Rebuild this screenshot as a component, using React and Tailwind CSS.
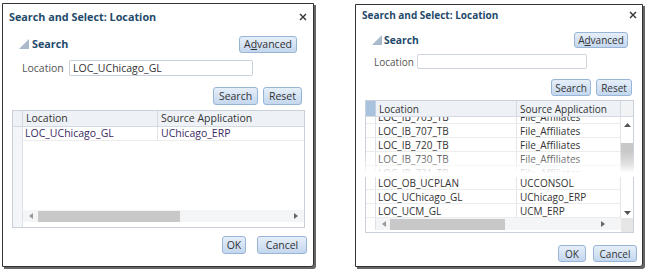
import React from 'react';

function Btn({ children, className }) {
    return (
        <div
            className={`flex items-center justify-center rounded-[3px] border border-[#98b4d6] bg-linear-to-b from-[#e6eff9] to-[#c4d7ee] text-[#333] ${className}`}
        >
            {children}
        </div>
    );
}

function CloseX() {
    return (
        <svg width="8" height="8" viewBox="0 0 8 8">
            <path d="M1 1L7 7M7 1L1 7" stroke="#333" strokeWidth="1.4" />
        </svg>
    );
}

function Disclosure() {
    return (
        <svg width="10" height="10" viewBox="0 0 10 10">
            <polygon points="0,10 10,0 10,10" fill="#a9bacd" />
        </svg>
    );
}

function ArrowLeft() {
    return (
        <svg width="4" height="6" viewBox="0 0 4 6">
            <polygon points="4,0 0,3 4,6" fill="#999" />
        </svg>
    );
}

function ArrowRight() {
    return (
        <svg width="4" height="6" viewBox="0 0 4 6">
            <polygon points="0,0 4,3 0,6" fill="#666" />
        </svg>
    );
}

function ArrowUp() {
    return (
        <svg width="7" height="4" viewBox="0 0 7 4">
            <polygon points="0,4 3.5,0 7,4" fill="#555" />
        </svg>
    );
}

function ArrowDown() {
    return (
        <svg width="7" height="4" viewBox="0 0 7 4">
            <polygon points="0,0 3.5,4 7,0" fill="#555" />
        </svg>
    );
}

function LeftDialog() {
    return (
        <div className="ml-[2px] mt-[3px] flex h-[264px] w-[312px] flex-col rounded-br-[3px] border border-[#333] bg-white text-[10.5px] shadow-[2px_2px_0_0_#666]">
            <div className="mt-[5px] flex h-[16px] items-center justify-between pl-[6px] pr-[6px]">
                <span className="text-[10.8px] font-bold text-[#1f4a6b]">Search and Select: Location</span>
                <CloseX />
            </div>

            <div className="mt-[11px] flex h-[17px] items-center justify-between pl-[16px] pr-[16px]">
                <div className="flex items-center gap-[3px]">
                    <Disclosure />
                    <span className="text-[10.8px] font-bold text-[#1f4a6b]">Search</span>
                </div>
                <Btn className="h-[17px] w-[58px]">
                    A<span className="underline">d</span>vanced
                </Btn>
            </div>

            <div className="mt-[7px] flex h-[16px] items-center pl-[19px]">
                <span className="w-[47px] text-[#555]">Location</span>
                <div className="flex h-[16px] w-[184px] items-center rounded-[2px] border border-[#c9d2dc] pl-[3px] text-[#333]">
                    LOC_UChicago_GL
                </div>
            </div>

            <div className="mt-[11px] flex h-[18px] justify-end gap-[5px] pr-[11px]">
                <Btn className="h-[18px] w-[45px]">Search</Btn>
                <Btn className="h-[18px] w-[39px]">Reset</Btn>
            </div>

            <div className="ml-[9px] mt-[5px] flex h-[118px] w-[293px] flex-col border border-[#c9d0d9]">
                <div className="flex h-[16px] border-b border-[#d4dae2] bg-[#eef2f6] text-[#333]">
                    <div className="w-[10px] border-r border-[#d4dae2]" />
                    <div className="flex w-[135px] items-center border-r border-[#d4dae2] pl-[3px]">Location</div>
                    <div className="flex flex-1 items-center pl-[3px]">Source Application</div>
                </div>
                <div className="flex flex-1">
                    <div className="w-[10px] border-r border-[#dde2e8] bg-[#f3f5f8]" />
                    <div className="flex flex-1 flex-col">
                        <div className="flex h-[14px] border-b border-[#ececec] text-[#3b2a66]">
                            <div className="flex w-[135px] items-center border-r border-[#e4e4e4] pl-[2px]">LOC_UChicago_GL</div>
                            <div className="flex flex-1 items-center pl-[3px]">UChicago_ERP</div>
                        </div>
                        <div className="flex-1" />
                        <div className="flex h-[12px] items-center bg-[#f4f5f7]">
                            <div className="ml-[6px]">
                                <ArrowLeft />
                            </div>
                            <div className="ml-[5px] h-[11px] w-[142px] bg-[#c8c8c8]" />
                            <div className="flex-1" />
                            <div className="mr-[6px]">
                                <ArrowRight />
                            </div>
                        </div>
                        <div className="h-[5px]" />
                    </div>
                </div>
            </div>

            <div className="mt-[8px] flex h-[18px] justify-end gap-[11px] pr-[6px]">
                <Btn className="h-[18px] w-[24px]">OK</Btn>
                <Btn className="h-[18px] w-[50px]">Cancel</Btn>
            </div>
        </div>
    );
}

const rightRows = [
    ['LOC_IB_707_TB', 'File_Affiliates'],
    ['LOC_IB_720_TB', 'File_Affiliates'],
    ['LOC_IB_730_TB', 'File_Affiliates'],
];

const rightRowsBottom = [
    ['LOC_OB_UCPLAN', 'UCCONSOL'],
    ['LOC_UChicago_GL', 'UChicago_ERP'],
    ['LOC_UCM_GL', 'UCM_ERP'],
];

function Row({ loc, app, className }) {
    return (
        <div className={`flex h-[14px] shrink-0 border-b border-[#ececec] text-[#333] ${className}`}>
            <div className="w-[10px] border-r border-[#dde2e8]" />
            <div className="flex w-[141px] items-center border-r border-[#e4e4e4] pl-[2px]">{loc}</div>
            <div className="flex flex-1 items-center pl-[3px]">{app}</div>
        </div>
    );
}

function RightDialog() {
    return (
        <div className="relative ml-[41px] mt-[4px] flex h-[263px] w-[288px] flex-col rounded-br-[3px] border border-[#333] bg-white text-[10px] shadow-[2px_2px_0_0_#666]">
            <div className="mt-[3px] flex h-[14px] items-center justify-between pl-[6px] pr-[5px]">
                <span className="text-[10px] font-bold text-[#1f4a6b]">Search and Select: Location</span>
                <CloseX />
            </div>

            <div className="mt-[10px] flex h-[16px] items-center justify-between pl-[16px] pr-[14px]">
                <div className="flex items-center gap-[2px]">
                    <Disclosure />
                    <span className="text-[10.3px] font-bold text-[#1f4a6b]">Search</span>
                </div>
                <Btn className="h-[16px] w-[54px]">
                    A<span className="underline">d</span>vanced
                </Btn>
            </div>

            <div className="mt-[6px] flex h-[15px] items-center pl-[18px]">
                <span className="w-[43px] text-[#555]">Location</span>
                <div className="h-[15px] w-[170px] rounded-[2px] border border-[#cfd6de]" />
            </div>

            <div className="mt-[10px] flex h-[17px] justify-end gap-[5px] pr-[10px]">
                <Btn className="h-[17px] w-[40px]">Search</Btn>
                <Btn className="h-[17px] w-[36px]">Reset</Btn>
            </div>

            <div className="ml-[9px] mt-[4px] flex h-[133px] w-[269px] flex-col border border-[#c9d0d9]">
                <div className="flex h-[16px] shrink-0 border-b border-[#d4dae2] bg-[#eef2f6] text-[#333]">
                    <div className="w-[10px] border-r border-[#c3d2e3] bg-[#a9c2de]" />
                    <div className="flex w-[141px] items-center border-r border-[#d4dae2] pl-[3px]">Location</div>
                    <div className="flex w-[104px] items-center border-r border-[#d4dae2] pl-[3px]">Source Application</div>
                    <div className="flex-1 bg-[#f2f3f5]" />
                </div>
                <div className="flex h-[101px] shrink-0">
                    <div className="flex w-[255px] flex-col overflow-hidden">
                        <Row loc="LOC_IB_705_TB" app="File_Affiliates" className="-mt-[7px]" />
                        {rightRows.map((r) => (
                            <Row key={r[0]} loc={r[0]} app={r[1]} />
                        ))}
                        <div className="h-[10px] shrink-0 overflow-hidden">
                            <Row loc="LOC_IB_731_TB" app="File_Affiliates" />
                        </div>
                        {rightRowsBottom.map((r) => (
                            <Row key={r[0]} loc={r[0]} app={r[1]} />
                        ))}
                    </div>
                    <div className="flex flex-1 flex-col items-center border-l border-[#e4e4e4]">
                        <div className="mt-[6px]">
                            <ArrowUp />
                        </div>
                        <div className="mt-[16px] h-[30px] w-[12px] bg-[#c8c8c8]" />
                        <div className="flex-1" />
                        <div className="mb-[3px]">
                            <ArrowDown />
                        </div>
                    </div>
                </div>
                <div className="flex h-[12px] shrink-0">
                    <div className="w-[10px] border-r border-[#dde2e8]" />
                    <div className="flex w-[245px] items-center bg-[#f4f5f7]">
                        <div className="ml-[6px]">
                            <ArrowLeft />
                        </div>
                        <div className="ml-[4px] h-[11px] w-[115px] bg-[#c8c8c8]" />
                        <div className="flex-1" />
                        <div className="mr-[16px]">
                            <ArrowRight />
                        </div>
                    </div>
                    <div className="flex-1 bg-[#e6e6e6]" />
                </div>
                <div className="flex flex-1">
                    <div className="w-[255px]" />
                    <div className="flex-1 bg-[#e6e6e6]" />
                </div>
            </div>

            <div className="mt-[12px] flex h-[17px] justify-end gap-[7px] pr-[5px]">
                <Btn className="h-[17px] w-[28px]">OK</Btn>
                <Btn className="h-[17px] w-[44px]">Cancel</Btn>
            </div>

            <div className="absolute left-0 right-0 top-[146px] h-[26px] bg-linear-to-b from-white/0 via-white/45 via-50% to-white to-85%" />
        </div>
    );
}

export default function App() {
    return (
        <div className="flex h-[278px] w-[651px] items-start bg-white font-['Open_Sans',sans-serif] text-[11px] leading-none">
            <LeftDialog />
            <RightDialog />
        </div>
    );
}
